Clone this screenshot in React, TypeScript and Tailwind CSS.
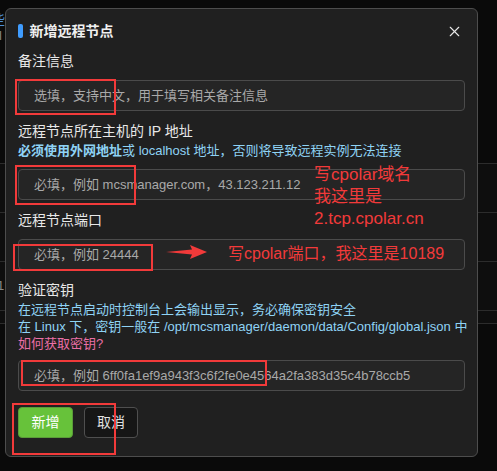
import React from "react";
import { X } from "lucide-react";

const font = { fontFamily: '"Liberation Sans", "Noto Sans CJK SC", sans-serif' };

interface FieldProps {
  label: string;
  placeholder: string;
  children?: React.ReactNode;
  inputGap?: string;
}

const Field: React.FC<FieldProps> = ({ label, placeholder, children, inputGap = "mt-[9px]" }) => {
  return (
    <div className="flex flex-col">
      <div className="text-[14px] leading-[19px] text-[#e8e8e8]">{label}</div>
      {children}
      <div
        className={`${inputGap} h-[31px] rounded-[4px] border border-[#4b4b4b] bg-[#252525] pl-[15px] flex items-center text-[13px] text-[#a9a9a9] whitespace-nowrap overflow-hidden`}
      >
        {placeholder}
      </div>
    </div>
  );
};

const RedBox: React.FC<{ className: string }> = ({ className }) => (
  <div className={`absolute border-2 border-[#f23a3a] ${className}`} />
);

export default function App() {
  return (
    <div style={font} className="relative w-[497px] h-[471px] bg-[#0a0a0a] overflow-hidden">
      {/* page behind the modal */}
      <div className="flex flex-col">
        <div className="h-[163px] pt-[12px] text-[13px] leading-[16px]">
          <div className="text-[#4f8fd6] -ml-[8px]">些</div>
          <div className="text-[#888] -ml-[4px]">ll</div>
        </div>
        <div className="h-[49px] border-t border-[#2c2c2c] bg-[#0e0e0e]" />
        <div className="h-[49px] border-t border-[#2c2c2c] bg-[#0e0e0e]" />
        <div className="h-[49px] border-t border-[#2c2c2c] bg-[#0e0e0e] pt-[14px] text-[13px] text-[#888] -ml-[3px]">1</div>
        <div className="h-[13px] border-t border-[#2c2c2c] bg-[#0e0e0e]" />
        <div className="border-t border-[#2c2c2c]" />
      </div>

      {/* modal */}
      <div className="absolute left-[5px] top-[8px] w-[473px] h-[449px] rounded-[6px] border border-[#4d4d4d] bg-[#202020] px-[12px] pt-[11px]">
        <div className="flex items-center justify-between h-[22px]">
          <div className="flex items-center gap-[7px]">
            <span className="w-[4.5px] h-[14px] rounded-[2px] bg-[#3f9cff]" />
            <span className="text-[14px] font-bold text-[#f0f0f0]">新增远程节点</span>
          </div>
          <X className="mr-[2px] text-[#e8e8e8]" size={17} strokeWidth={1.6} />
        </div>

        <div className="mt-[10px] flex flex-col gap-[11px]">
          <Field label="备注信息" placeholder="选填，支持中文，用于填写相关备注信息" />
          <Field label="远程节点所在主机的 IP 地址" placeholder="必填，例如 mcsmanager.com，43.123.211.12">
            <div className="text-[13px] leading-[19px] text-[#8fd3f5]">
              <span className="font-bold">必须使用外网地址</span>或 localhost 地址，否则将导致远程实例无法连接
            </div>
          </Field>
          <Field label="远程节点端口" placeholder="必填，例如 24444" />
          <Field
            label="验证密钥"
            placeholder="必填，例如 6ff0fa1ef9a943f3c6f2fe0e4564a2fa383d35c4b78ccb5"
            inputGap="mt-[8px]"
          >
            <div className="mt-[1px] text-[13px] leading-[17px] text-[#8fd3f5] whitespace-nowrap">
              <div>在远程节点启动时控制台上会输出显示，务必确保密钥安全</div>
              <div>在 Linux 下，密钥一般在 /opt/mcsmanager/daemon/data/Config/global.json 中</div>
              <div className="text-[#ea6fa6]">如何获取密钥?</div>
            </div>
          </Field>
        </div>

        <div className="mt-[16px] flex gap-[11px]">
          <button className="w-[55px] h-[31px] rounded-[4px] border border-[#5a9c38] bg-[#67c23a] text-[14px] text-white">
            新增
          </button>
          <button className="w-[54px] h-[31px] rounded-[4px] border border-[#4f4f4f] bg-[#161616] text-[14px] text-[#e0e0e0]">
            取消
          </button>
        </div>
      </div>

      {/* annotations */}
      <RedBox className="left-[15px] top-[79px] w-[101px] h-[36px]" />
      <RedBox className="left-[15px] top-[165px] w-[121px] h-[40px]" />
      <RedBox className="left-[13px] top-[244px] w-[140px] h-[27px]" />
      <RedBox className="left-[21px] top-[360px] w-[246px] h-[26px]" />
      <RedBox className="left-[12px] top-[403px] w-[104px] h-[52px]" />

      <div className="absolute left-[314px] top-[164px] text-[17px] leading-[22px] text-[#f23a3a]">
        <div>写cpolar域名</div>
        <div>我这里是</div>
        <div>2.tcp.cpolar.cn</div>
      </div>
      <svg className="absolute left-[166px] top-[244px]" width="42" height="16" viewBox="0 0 42 16">
        <polygon points="0,8 26,5.5 24,1 41,8 24,15 26,10.5" fill="#f23a3a" />
      </svg>
      <div className="absolute left-[228px] top-[243px] text-[16px] leading-[22px] text-[#f23a3a] whitespace-nowrap">
        写cpolar端口，我这里是10189
      </div>
    </div>
  );
}
